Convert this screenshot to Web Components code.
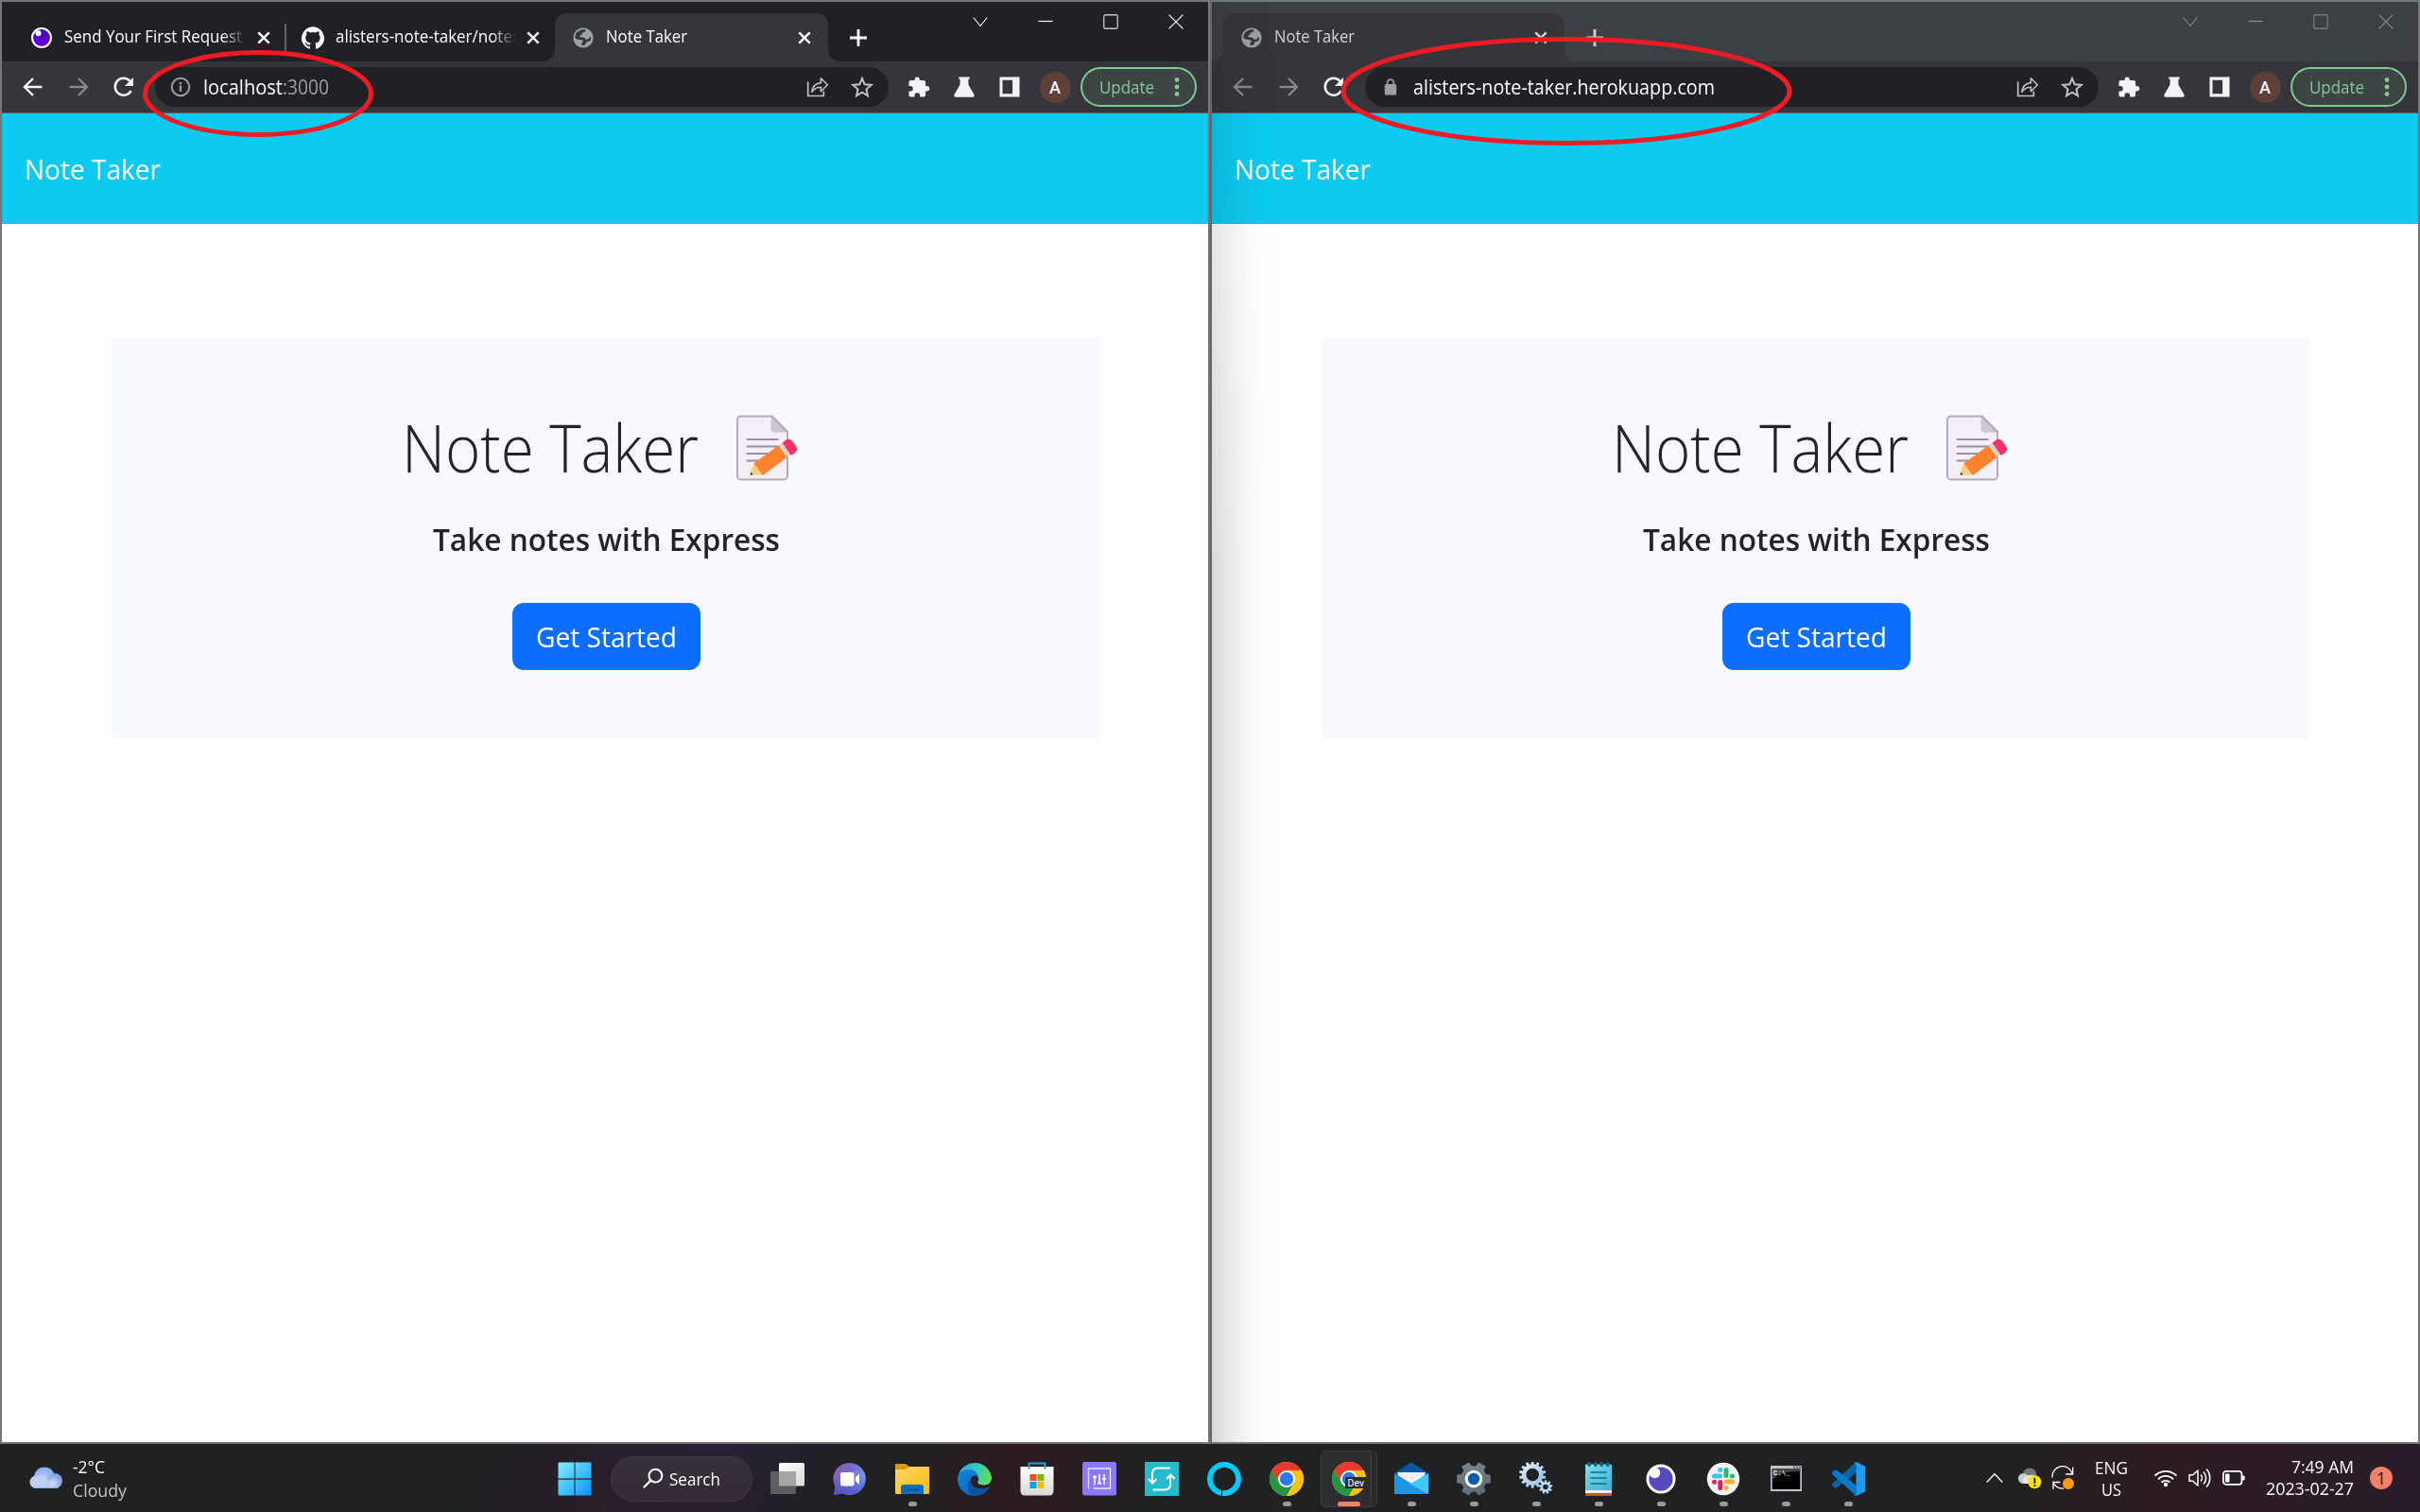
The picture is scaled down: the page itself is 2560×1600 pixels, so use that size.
<!DOCTYPE html>
<html lang="en">
<head>
<meta charset="utf-8">
<title>Note Taker</title>
<style>
body{margin:0;width:2560px;height:1600px;overflow:hidden;background:#202123;font-family:"Open Sans","Noto Sans",sans-serif}
</style>
</head>
<body>
<desk-top></desk-top>
<script>
const define = (name, html, init) => {
  const tpl = document.createElement('template');
  tpl.innerHTML = html;
  customElements.define(name, class extends HTMLElement {
    connectedCallback() {
      if (this.shadowRoot) return;
      this.attachShadow({mode: 'open'}).append(tpl.content.cloneNode(true));
      if (init) init(this, this.shadowRoot);
    }
  });
};

/* Icon set: [width, height, markup]; the viewBox has the same size. */
const chrome = `<circle cx="18" cy="18" r="18" fill="#fbbc05"/><path d="M2.4 9A18 18 0 0 1 33.6 9L18 9 10.2 22.5z" fill="#e63b2e"/><path d="M2.4 9A18 18 0 0 0 18 36L25.8 22.5 18 18 10.2 22.5z" fill="#259545"/><path d="M33.6 9A18 18 0 0 1 18 36L25.8 22.5 18 9z" fill="#fbc116"/><circle cx="18" cy="18" r="9" fill="#fff"/><circle cx="18" cy="18" r="7.2" fill="#2a79e8"/>`;
const gearPath = (cx, cy, ro, ri, n) => {
  let d = '';
  for (let i = 0; i < n; i++) {
    const a = i * 2 * Math.PI / n - Math.PI / 2, s = Math.PI / n;
    [[ri, -s * 1.0], [ri, -s * .62], [ro, -s * .42], [ro, s * .42], [ri, s * .62]].forEach(([r, o]) => {
      d += (d ? 'L' : 'M') + (cx + r * Math.cos(a + o)).toFixed(2) + ' ' + (cy + r * Math.sin(a + o)).toFixed(2);
    });
  }
  return d + 'z';
};
const hole = (cx, cy, r) => `M${cx - r} ${cy}a${r} ${r} 0 1 0 ${2 * r} 0a${r} ${r} 0 1 0 ${-2 * r} 0z`;
const ICONS = {
  back: [24, 24, `<path d="M21.5 12H3.5M12 3L3 12l9 9" fill="none" stroke="currentColor" stroke-width="2.4"/>`],
  forward: [24, 24, `<path d="M2.5 12h18M12 3l9 9-9 9" fill="none" stroke="currentColor" stroke-width="2.4"/>`],
  reload: [24, 24, `<path d="M19.6 16.2A9 9 0 1 1 18.6 6" fill="none" stroke="currentColor" stroke-width="2.5"/><path d="M22 2v9h-9z" fill="currentColor"/>`],
  info: [24, 24, `<circle cx="12" cy="12" r="9.3" fill="none" stroke="currentColor" stroke-width="2"/><path d="M12 10.6v6.4M12 7v2.2" stroke="currentColor" stroke-width="2.2"/>`],
  lock: [24, 24, `<rect x="5.8" y="9" width="12.4" height="11.5" rx="1.5" fill="currentColor"/><path d="M8.6 10V7.6a3.4 3.4 0 0 1 6.8 0V10" fill="none" stroke="currentColor" stroke-width="1.8"/>`],
  share: [24, 24, `<path d="M1.7 6.5v15h16.6v-5" fill="none" stroke="currentColor" stroke-width="1.7"/><path d="M5.8 17.4C6.6 11 10 8 15.4 7.6V2.8l7 7-7 7v-4.6c-4.2 0-7 1.4-9.6 5.2z" fill="none" stroke="currentColor" stroke-width="1.6" stroke-linejoin="round"/>`],
  star: [24, 24, `<path d="M12 2.8l2.7 6.5 7 .6-5.3 4.6 1.6 6.9-6-3.7-6 3.7 1.6-6.9L2.300 9.900l7-.6z" fill="none" stroke="currentColor" stroke-width="2"/>`],
  puzzle: [24, 24, `<path d="M20.6 11.100h-1.500V6.900c0-1.100-.9-2-2-2h-4.200V3.600a2.700 2.700 0 0 0-5.300 0v1.300H3.500c-1.100 0-2 .9-2 2v4h1.400a2.850 2.850 0 0 1 0 5.700H1.500v4c0 1.100.9 2 2 2h4v-1.400a2.850 2.850 0 0 1 5.700 0v1.400h3.900c1.100 0 2-.9 2-2v-4.200h1.500a2.650 2.650 0 0 0 0-5.300z" fill="currentColor"/>`],
  flask: [24, 24, `<path d="M6.300 1.500h11.400v2.300h-1.300v5.800l6 10.300c.8 1.400-.1 2.800-1.500 2.800H3.100c-1.400 0-2.300-1.400-1.500-2.800l6-10.300V3.800H6.300z" fill="currentColor"/>`],
  panel: [24, 24, `<path d="M1.500 1.500h21v21h-21zM4.500 4.800v14.500h10.600V4.800z" fill="currentColor" fill-rule="evenodd"/>`],
  close: [16, 16, `<path d="M2.300 2.300l11.400 11.400M13.700 2.300L2.300 13.700" stroke="currentColor" stroke-width="2.400"/>`],
  plus: [20, 20, `<path d="M10 1v18M1 10h18" stroke="currentColor" stroke-width="2.800"/>`],
  dots: [8, 24, `<g fill="currentColor"><circle cx="4" cy="4.500" r="2.400"/><circle cx="4" cy="12" r="2.400"/><circle cx="4" cy="19.500" r="2.400"/></g>`],
  chev: [16, 16, `<path d="M.7 3.500L8 12.500l7.300-9" fill="none" stroke="currentColor" stroke-width="1.100"/>`],
  min: [16, 16, `<path d="M.5 7.500h15" stroke="currentColor" stroke-width="1.200"/>`],
  max: [16, 16, `<rect x=".75" y=".75" width="14.500" height="14.500" rx="1.500" fill="none" stroke="currentColor" stroke-width="1.300" opacity=".75"/>`],
  exit: [16, 16, `<path d="M.6.6l14.800 14.800M15.400.6L.6 15.400" stroke="currentColor" stroke-width="1.200"/>`],
  globe: [22, 22, `<circle cx="11" cy="11" r="10.600" fill="#9aa0a6"/><path d="M5 4.600C8.200 2.300 11.500 2 13.600 2.500c-.2 1.700-1 2.500-2.600 2.700-1.300.2-1.200 1.300-1.600 2.300-.5 1-2 .6-2.200 1.700-.1 1.100 1.200 1.200 2.700 1.200 2 0 3.300.9 3.600 2.300h1.900c1 0 1.700-.5 1.900-1.400.3-1 1-1.200 2-.9-.1 1.400-.5 2.900-1.200 4-1.300.4-2.900.2-3.500.9-.7.8-.7 2.600-1.900 3.300-1 .5-2.700.6-3.600 0v-1.700c1.300-.4 1.800-1.300 1.500-2.600-.4-1.200-2-1-3.600-1.200-1.800-.3-3.800-1-4.600-2.100C2.300 8.700 3.300 6 5 4.600z" fill="#35363a"/>`],
  postman: [22, 22, `<circle cx="11" cy="11" r="11" fill="#fff"/><circle cx="11" cy="11" r="8.900" fill="url(#pm)"/><circle cx="7.600" cy="6.300" r="3" fill="#fff"/><defs><linearGradient id="pm" x1="0" y1="0" x2="0" y2="1"><stop offset="0" stop-color="#4000bf"/><stop offset="1" stop-color="#6c05dc"/></linearGradient></defs>`],
  github: [24, 24, `<path fill="#fff" d="M12 .3a12 12 0 0 0-3.800 23.400c.6.100.8-.3.800-.6v-2c-3.300.7-4-1.600-4-1.600-.6-1.400-1.400-1.800-1.400-1.800-1-.7.100-.7.100-.7 1.200 0 1.900 1.200 1.900 1.200 1 1.800 2.800 1.300 3.500 1 0-.8.4-1.300.7-1.600-2.700-.3-5.500-1.300-5.500-6 0-1.200.5-2.300 1.300-3.100-.2-.4-.6-1.600 0-3.200 0 0 1-.3 3.400 1.200a11.500 11.500 0 0 1 6 0c2.300-1.500 3.300-1.200 3.300-1.200.6 1.600.2 2.800 0 3.200.9.800 1.300 1.900 1.300 3.200 0 4.600-2.800 5.600-5.500 5.900.5.400.9 1 .9 2.200v3.300c0 .3.100.7.800.6A12 12 0 0 0 12 .3"/>`],
  memo: [66, 70, `<path d="M5 1.500h32.500L54 18v46.500a4 4 0 0 1-4 4H5a4 4 0 0 1-4-4v-59a4 4 0 0 1 4-4z" fill="#f3eef8" stroke="#b4acbc" stroke-width="2"/><path d="M36.500 1.500L54 18.500H40.500a4 4 0 0 1-4-4z" fill="#cdc4d6"/><path d="M37.500 1.500L54 18" stroke="#b4acbc" stroke-width="2"/><path d="M11.500 26h32M11.500 33.500h32M11.500 41h24M11.500 48.500h15" stroke="#998ea4" stroke-width="2.200" stroke-linecap="round"/><path d="M14.500 63.500L18.500 51l9.500 12.800z" fill="#ffce7c"/><path d="M14.500 63.500l.9-3 2.400 3.100z" fill="#402a32"/><path d="M18.500 51.200L45 32l9 12.600L27.800 64z" fill="#ff822d"/><path d="M44.600 32.300l4.200-3 9 12.400-4.300 3.200z" fill="#d3d3d3"/><path d="M48.600 29.400l3.200-2.300q4.200-2.900 7.300.7l3.900 5.300q2.800 4.100-1.200 7.200l-4 2.600-9.200-13.500z" fill="#fb2f65"/>`],
  weather: [36, 24, `<defs><radialGradient id="w1" cx=".45" cy=".75" r=".8"><stop offset="0" stop-color="#c4d5f4"/><stop offset="1" stop-color="#86a9ee"/></radialGradient><radialGradient id="w2" cx=".35" cy=".7" r=".75"><stop offset="0" stop-color="#d3e0f8"/><stop offset="1" stop-color="#7397e0"/></radialGradient></defs><circle cx="17" cy="11.500" r="11" fill="url(#w1)"/><circle cx="28" cy="15" r="8" fill="url(#w2)"/><path d="M7.500 9.500h10l8 13.500h-18A6.800 6.800 0 0 1 7.500 9.500z" fill="#bdd0f4"/><path d="M4 21.800Q6 23 8 23h20q2.500 0 4.500-1.200z" fill="#8fb2f0"/>`],
  start: [36, 36, `<defs><linearGradient id="st" x1="0" y1="0" x2="1" y2="1"><stop offset="0" stop-color="#7ff0ff"/><stop offset="1" stop-color="#0a93f8"/></linearGradient></defs><path d="M1.500.5H17.500V17.500H.5V1.500a1 1 0 0 1 1-1zM18.500.5h16a1 1 0 0 1 1 1v16h-17zM.5 18.700h17v16.800h-16a1 1 0 0 1-1-1zM18.500 18.700h17v15.800a1 1 0 0 1-1 1h-16z" fill="url(#st)"/>`],
  search: [22, 22, `<circle cx="13.400" cy="8.600" r="6.900" fill="none" stroke="#fff" stroke-width="2"/><path d="M8.400 13.600L1.500 20.500" stroke="#fff" stroke-width="2.200" stroke-linecap="round"/>`],
  tasks: [36, 36, `<defs><linearGradient id="tv" x1="0" y1="0" x2="1" y2="1"><stop offset="0" stop-color="#fff"/><stop offset="1" stop-color="#d9d9d9"/></linearGradient></defs><rect x="9" y="1" width="27" height="24.500" rx="1.500" fill="url(#tv)"/><rect x="0" y="10" width="27" height="24" rx="1.500" fill="#5e5e5e"/><path d="M9 10h18v15.500H9z" fill="#a5a5a5"/>`],
  chat: [36, 36, `<defs><linearGradient id="ch" x1="0" y1="0" x2="1" y2=".5"><stop offset="0" stop-color="#8f60a8"/><stop offset=".5" stop-color="#7468cc"/><stop offset="1" stop-color="#7a9bf0"/></linearGradient><linearGradient id="ch2" x1="0" y1="0" x2="0" y2="1"><stop offset=".4" stop-color="#5059c9" stop-opacity="0"/><stop offset="1" stop-color="#5451c8"/></linearGradient></defs><path d="M18 1a17 17 0 1 1-7 32.600L1 35l1.500-9A17 17 0 0 1 18 1z" fill="url(#ch)"/><path d="M18 1a17 17 0 1 1-7 32.600L1 35l1.500-9A17 17 0 0 1 18 1z" fill="url(#ch2)"/><rect x="8" y="11" width="14.500" height="14.500" rx="2" fill="#fff"/><path d="M24 16l4-3.200v11L24 20.500z" fill="#fff"/>`],
  folder: [36, 36, `<defs><linearGradient id="fo" x1="0" y1="0" x2="1" y2="1"><stop offset="0" stop-color="#ffd766"/><stop offset="1" stop-color="#fcb90d"/></linearGradient></defs><path d="M0 3a1 1 0 0 1 1-1h10l4 3v3H0z" fill="#dd9a00"/><path d="M0 8h11l4-3h20a1 1 0 0 1 1 1v27a1 1 0 0 1-1 1H1a1 1 0 0 1-1-1z" fill="url(#fo)"/><path d="M6 34V27a3 3 0 0 1 3-3h18a3 3 0 0 1 3 3v7z" fill="#0a6fc2"/><path d="M11 29.500h14" stroke="#0a4a88" stroke-width="1.500"/>`],
  edge: [36, 36, `<defs><linearGradient id="e1" x1="0" y1=".3" x2="1" y2=".5"><stop offset="0" stop-color="#2fa8e8"/><stop offset=".5" stop-color="#34c6c4"/><stop offset="1" stop-color="#66e04d"/></linearGradient><linearGradient id="e2" x1="0" y1="0" x2=".6" y2="1"><stop offset="0" stop-color="#1286d8"/><stop offset="1" stop-color="#0869c6"/></linearGradient></defs><path d="M.8 14A18 18 0 0 1 36 17c0 5-4 7.500-8 7.500-4 0-8-1.500-6.500-4 1.500-2 .6-6.500-4-6.500z" fill="url(#e1)"/><path d="M0 18C0 11 6 8 12 8c6.500 0 10.500 5 10 10 0-4-6-5-8 0-2 6 2 11.500 8 14-2 3-4 4-4 4A18 18 0 0 1 0 18z" fill="url(#e2)"/><path d="M14 18c-6 5-4 15 4 18 7 0 12-3.500 15.500-8.500.6-1-.2-1-1-.7C22 31 13 26 14 18z" fill="#124f9f"/>`],
  store: [36, 36, `<defs><linearGradient id="so" x1="0" y1="0" x2="0" y2="1"><stop offset="0" stop-color="#fff"/><stop offset="1" stop-color="#d8d8d8"/></linearGradient></defs><path d="M.5 5h35v26a4.500 4.500 0 0 1-4.500 4.500H5A4.500 4.500 0 0 1 .5 31z" fill="url(#so)"/><path d="M9.500 7.500v-6h17v6" fill="none" stroke="#1da2e4" stroke-width="2"/><path d="M10.500 13h7v7h-7z" fill="#f25022"/><path d="M18.500 13h7v7h-7z" fill="#7fba00"/><path d="M10.500 21h7v7h-7z" fill="#00a4ef"/><path d="M18.500 21h7v7h-7z" fill="#ffb900"/>`],
  mixer: [36, 36, `<rect width="36" height="35.500" rx="2.500" fill="#8b79fb"/><path d="M11.500 28H29.500V7H6.500v21.500" fill="none" stroke="#ece8ff" stroke-width="1.300"/><path d="M13 14v10.500M18 13v9M23 13v11" stroke="#fff" stroke-width="1.500"/><path d="M11 16h4M16 22.500h4M21 18h4" stroke="#fff" stroke-width="1.800"/>`],
  sync: [36, 36, `<rect width="36" height="36" fill="#27b9cc"/><path d="M27 6.500H14q-6 0-6 6V22M4 18l4.200 4.500L12.500 18M8.500 29.500h12q6.500 0 6.500-6V14M23 18l4.200-4.500 4.300 4.500" fill="none" stroke="#fff" stroke-width="2"/>`],
  alexa: [36, 36, `<circle cx="18" cy="18" r="15.100" fill="none" stroke="#00caff" stroke-width="5.800"/><path d="M15.500 36v-6.500" stroke="#202123" stroke-width="1"/><path d="M16 35.800V31.500C24 29.500 29 26 30.500 20l4 3C31 32 24 36 16 35.800z" fill="#00caff"/>`],
  chrome: [36, 36, chrome],
  dev: [36, 36, chrome + `<rect x="14" y="16" width="22" height="12" fill="#2b2b2b"/><text x="16.500" y="26" font-size="10.500" font-family="Roboto,sans-serif" fill="#fff">Dev</text>`],
  mail: [36, 36, `<path d="M0 12L16.500 1.200q1.500-1 3 0L36 12 18 20z" fill="#0a57a4"/><path d="M3.500 11h29v3L18 25 3.500 14z" fill="#eee"/><path d="M0 12l18 11v11H0z" fill="#1c97e6"/><path d="M36 12L14 25l22 9z" fill="#3ccaf6"/><path d="M14 22l22 12H1q-1 0-1-1z" fill="#1f93e4"/>`],
  gear: [36, 36, `<defs><linearGradient id="ge" x1="0" y1="0" x2="1" y2="1"><stop offset="0" stop-color="#7e8890"/><stop offset="1" stop-color="#5c666e"/></linearGradient></defs><path d="${gearPath(18,18,17.500,13,6)}" fill="url(#ge)" stroke="url(#ge)" stroke-width="1.500" stroke-linejoin="round" transform="rotate(30 18 18)"/><circle cx="18" cy="18" r="9.300" fill="#f2f2f2"/><circle cx="18" cy="18" r="6.200" fill="#0c5cab"/>`],
  gears: [36, 36, `<defs><linearGradient id="gs" x1="0" y1="0" x2="1" y2="1"><stop offset="0" stop-color="#eaf5fb"/><stop offset="1" stop-color="#8fb8e8"/></linearGradient></defs><path d="${gearPath(14.200,13.500,14.200,11.200,14)}${hole(14.200,13.500,6.800)}" fill="url(#gs)" fill-rule="evenodd"/><path d="${gearPath(28,26.500,7.400,5.400,9)}${hole(28,26.500,2.800)}" fill="#b7d8ef" fill-rule="evenodd"/>`],
  notepad: [36, 36, `<defs><linearGradient id="np" x1="0" y1="0" x2="1" y2="1"><stop offset="0" stop-color="#7fe0ef"/><stop offset="1" stop-color="#38b1ce"/></linearGradient></defs><path d="M4 31h28v4a1 1 0 0 1-1 1H5a1 1 0 0 1-1-1z" fill="#c05a10"/><path d="M4 28h28v5H4z" fill="#f0f0f0"/><path d="M4 3.500a1 1 0 0 1 1-1h26a1 1 0 0 1 1 1V30H4z" fill="url(#np)"/><path d="M9.500 11h17M9.500 17h17M9.500 23h17" stroke="#0f6c88" stroke-width="1.700"/><g fill="#14677f"><rect x="6.500" width="3.500" height="5" rx="1.700"/><rect x="13" width="3.500" height="5" rx="1.700"/><rect x="19.500" width="3.500" height="5" rx="1.700"/><rect x="26" width="3.500" height="5" rx="1.700"/></g>`],
  insomnia: [36, 36, `<circle cx="18" cy="18" r="15.500" fill="#fff"/><circle cx="18" cy="18" r="12.600" fill="#5849be"/><circle cx="11.500" cy="11.500" r="5.800" fill="#fff"/>`],
  slack: [36, 36, `<circle cx="18" cy="18" r="17.200" fill="#f4f4f4"/><g stroke-width="5" stroke-linecap="round"><path d="M8.500 15h6" stroke="#36c5f0"/><path d="M21 8.500v6" stroke="#2eb67d"/><path d="M21.500 21h6" stroke="#ecb22e"/><path d="M14.800 21.500v6" stroke="#e01e5a"/><path d="M14.700 8.400h.1" stroke="#36c5f0"/><path d="M27.400 15h.1" stroke="#2eb67d"/><path d="M21 27.500h.1" stroke="#ecb22e"/><path d="M8.500 21.200h.1" stroke="#e01e5a"/></g>`],
  cmd: [36, 36, `<rect x="2" y="4" width="33" height="27" fill="#bfc3c6"/><path d="M26 5.500h2M29 5.500h2M32 5.500h2" stroke="#446" stroke-width="1.300"/><rect x="3.700" y="7" width="29.600" height="22" fill="#000"/><path d="M3.700 7h29.600v3C18 10 9 13 3.700 19z" fill="#454545"/><text x="4.800" y="14" font-size="7.500" font-weight="700" font-family="Liberation Mono,monospace" fill="#f2f2f2">C:\\_</text>`],
  vscode: [36, 36, `<path d="M25.500 1L1.600 22.500q-1.700 1.500 0 3l1.800 1.700q1.300 1 2.600 0L27 11z" fill="#0065a9"/><path d="M25.500 35L1.600 13.500q-1.700-1.500 0-3l1.800-1.700q1.300-1 2.600 0L27 25z" fill="#007acc"/><path d="M26.500 0L36 4.500v27L26.500 36z" fill="#1f9cf0"/><path d="M26.500 36q-1 0-2-1l2-3zM26.500 0q-1 0-2 1l2 3z" fill="#1f9cf0"/>`],
  up: [18, 12, `<path d="M.7 10.500L9 1.700l8.300 8.800" fill="none" stroke="#fff" stroke-width="1.400"/>`],
  cloud: [26, 24, `<circle cx="13" cy="9" r="7.500" fill="#777"/><circle cx="6.500" cy="12.500" r="5.500" fill="#c9c9c9"/><path d="M6 18h12V9Q10 8 6 13z" fill="#e8e8e8"/><circle cx="18.300" cy="16.300" r="7" fill="#ffe600"/><path d="M18.300 11.700v6M18.300 19.100v1.800" stroke="#222" stroke-width="1.900"/>`],
  update: [26, 26, `<path d="M2 12.500A10.800 10.800 0 0 1 23 8M23.700 1.500V9h-7.500M3 25v-7.500h7.500M3 18a11 11 0 0 0 11 6" fill="none" stroke="#fff" stroke-width="1.300"/><circle cx="19" cy="19" r="6" fill="#ff9a10"/>`],
  wifi: [26, 20, `<g fill="none" stroke="#fff" stroke-width="1.800"><path d="M1.500 7.700a16 16 0 0 1 23 0" /><path d="M5 11.300a11 11 0 0 1 16 0"/><path d="M8.500 14.700a6.300 6.300 0 0 1 9 0"/></g><circle cx="13" cy="17" r="2.200" fill="#fff"/>`],
  volume: [26, 22, `<path d="M2 7.800h3.800L11 3v16l-5.200-4.800H2z" fill="none" stroke="#fff" stroke-width="1.500" stroke-linejoin="round"/><path d="M14 7.500a5 5 0 0 1 0 7M17 4.500a9.500 9.500 0 0 1 0 13M20 1.500a14 14 0 0 1 0 19" fill="none" stroke="#fff" stroke-width="1.600"/>`],
  battery: [26, 18, `<rect x="1.900" y="1.900" width="19.500" height="14" rx="3" fill="none" stroke="#fff" stroke-width="1.700"/><rect x="4" y="4.500" width="4.500" height="9" rx="1" fill="#fff"/><path d="M22 6.500h1.200a1.500 1.500 0 0 1 1.500 1.500v2a1.500 1.500 0 0 1-1.500 1.500H22z" fill="#fff"/>`]
};
define('ui-icon', `<style>:host{display:inline-flex;flex:none}svg{display:block}</style>`, (el, root) => {
  const [w, h, m] = ICONS[el.getAttribute('name')];
  root.innerHTML += `<svg width="${w}" height="${h}" viewBox="0 0 ${w} ${h}">${m}</svg>`;
});

/* A line of text condensed or widened to a given advance width. */
define('fit-text', `<style>:host{display:block;flex:none;white-space:nowrap}span{display:inline-block;transform-origin:0 50%}</style><span><slot></slot></span>`, (el, root) => {
  const w = +el.getAttribute('w'), s = root.querySelector('span');
  el.style.width = w + 'px';
  const natural = s.getBoundingClientRect().width;
  if (natural) s.style.transform = `scaleX(${w / natural})`;
});

define('browser-tab', `<style>
:host{display:flex;align-items:center;height:51px;width:286px;box-sizing:border-box;padding:0 15px 0 19px;font-size:18px;color:#fff;flex:none}
:host([active]){background:#35363a;border-radius:12px 12px 0 0;width:289px;padding-right:17px;position:relative}
:host([wide]){width:361px;color:#d0d2d5}
:host([sep]) i{display:block;width:2px;height:30px;background:#5f6368;margin:0 -17px 0 14px}
:host([active])::before,:host([active])::after{content:"";position:absolute;bottom:0;width:12px;height:12px}
:host([active])::before{left:-12px;background:radial-gradient(circle at 0 0,transparent 11.5px,#35363a 12px)}
:host([active])::after{right:-12px;background:radial-gradient(circle at 100% 0,transparent 11.5px,#35363a 12px)}
.fav{width:24px;display:flex;justify-content:center;margin:0 12px 0 -1px}
.t{flex:1;overflow:hidden;min-width:0;padding-bottom:3px}
:host([fade]) .t{-webkit-mask-image:linear-gradient(90deg,#000 86%,transparent);mask-image:linear-gradient(90deg,#000 86%,transparent);margin-right:10px}
</style><div class="fav"><slot name="fav"></slot></div><div class="t"><slot></slot></div><ui-icon name="close"></ui-icon><i></i>`);

define('note-page', `<style>
:host{display:flex;flex-direction:column;flex:1;background:#fff;align-items:center}
header{align-self:stretch;height:117px;background:#0dcaf0;color:#fff;font-size:29.500px;display:flex;align-items:center;padding-left:24px;box-sizing:border-box}
main{margin:120px 0 0 2px;width:1044px;height:424px;background:#f8f9fc;display:flex;flex-direction:column;align-items:center;color:#212529}
.h{display:flex;align-items:center;height:84px;margin-top:75px;font-size:70px;font-weight:300;gap:40px;padding-right:12px;line-height:84px}
.h fit-text{margin-top:-3px}
h4{margin:29px 0 0;font-size:33px;font-weight:600;line-height:52px;height:52px}
button{margin:41px 0 0;font:29.500px "Open Sans",sans-serif;border:0;background:#0d6efd;color:#fff;border-radius:12px;width:199px;height:71px;display:flex;align-items:center;justify-content:center;padding:0}
</style>
<header><fit-text w="144">Note Taker</fit-text></header>
<main><div class="h"><fit-text w="314">Note Taker</fit-text><ui-icon name="memo"></ui-icon></div>
<h4><fit-text w="367">Take notes with Express</fit-text></h4>
<button><fit-text w="149">Get Started</fit-text></button></main>`);

define('tool-bar', `<style>
:host{display:flex;align-items:center;height:54px;background:#35363a;border-bottom:1px solid #5c5d60;color:#f1f3f4;padding-left:9px}
.c{width:48px;display:flex;justify-content:center}.off{color:#87888b}
:host([nohistory]) .b{color:#87888b}
.o{margin:0 8px 0 9px;width:776px;height:42px;border-radius:21px;background:#202124;display:flex;align-items:center;box-sizing:border-box;padding:0 16px 0 15px;font-size:21px;color:#fff}
.g{flex:1}.o .s{color:#bdc1c6;display:flex;gap:23px}
.av{width:33px;height:33px;border-radius:50%;background:#5d4037;font:500 18px/33px Roboto,sans-serif;text-align:center}
.u{margin-left:3px;width:123px;height:42px;box-sizing:border-box;border:2px solid #81c995;border-radius:21px;background:#3c4543;color:#81c995;display:flex;align-items:center;font-size:18px;padding-left:18px;gap:20px}
</style>
<div class="c b"><ui-icon name="back"></ui-icon></div><div class="c off"><ui-icon name="forward"></ui-icon></div><div class="c"><ui-icon name="reload"></ui-icon></div>
<div class="o"><slot></slot><div class="g"></div><div class="s"><ui-icon name="share"></ui-icon><ui-icon name="star"></ui-icon></div></div>
<div class="c"><ui-icon name="puzzle"></ui-icon></div><div class="c"><ui-icon name="flask"></ui-icon></div><div class="c"><ui-icon name="panel"></ui-icon></div><div class="c"><div class="av">A</div></div>
<div class="u"><fit-text w="58">Update</fit-text><ui-icon name="dots"></ui-icon></div>`);

define('browser-window', `<style>
:host{display:flex;flex-direction:column;width:1280px;height:1528px;box-sizing:border-box;border:2px solid #767676;position:relative;--strip:#202124}
:host([idle]){--strip:#3c4043;border-left-color:#666}
.strip{height:63px;background:var(--strip);display:flex;align-items:flex-end;padding-left:12px;color:#fff;box-sizing:border-box}
:host([idle]) .strip{color:#d0d2d5}
.plus{height:51px;display:flex;align-items:center;margin-left:22px;flex:1}
.ctl{display:flex;gap:53px;align-self:flex-start;margin:13px 26px 0 0}
:host([idle]) .ctl{color:#8b8d8f}
.shade{display:none}
:host([idle]) .shade{display:block;position:absolute;inset:0 auto 0 0;width:72px;background:linear-gradient(90deg,rgba(0,0,0,.15),rgba(0,0,0,.09) 25%,rgba(0,0,0,.03) 55%,rgba(0,0,0,.008) 75%,transparent);-webkit-mask-image:linear-gradient(rgba(0,0,0,.45),#000 600px);mask-image:linear-gradient(rgba(0,0,0,.45),#000 600px)}
</style>
<div class="strip"><slot name="tabs"></slot><div class="plus"><ui-icon name="plus"></ui-icon></div>
<div class="ctl"><ui-icon name="chev"></ui-icon><ui-icon name="min"></ui-icon><ui-icon name="max"></ui-icon><ui-icon name="exit"></ui-icon></div></div>
<slot name="bar"></slot><note-page></note-page><div class="shade"></div>`);

define('task-cell', `<style>
:host{display:flex;width:66px;height:72px;flex:none;flex-direction:column;align-items:center;box-sizing:border-box;padding-top:19px;position:relative}
ui-icon{z-index:1}
i{display:block;width:9px;height:5px;border-radius:3px;background:#9a9a9a;margin-top:6px;visibility:hidden;z-index:1}
:host([run]) i{visibility:visible}:host([active]) i{visibility:visible;width:24px;margin-left:-1px;background:#f4806a}
:host([active])::before,:host([active])::after{content:"";position:absolute;left:3px;top:7px;width:52px;height:60px;border-radius:6px;background:#2d2d30;border:1px solid #404043;box-sizing:border-box}
:host([active])::before{width:60px;background:#28282b;border-color:#38383b}
:host([active])::after{width:54px}
</style>`, (el, root) => {
  const icon = document.createElement('ui-icon');
  icon.setAttribute('name', el.getAttribute('icon'));
  root.append(icon, document.createElement('i'));
});

define('task-bar', `<style>
:host{display:flex;height:72px;align-items:center;color:#fff;font-size:18px;line-height:24px;
background:radial-gradient(ellipse 190px 130px at 670px 72px,#341c2c99,transparent),radial-gradient(ellipse 170px 110px at 750px 0,#252136,transparent),radial-gradient(ellipse 130px 120px at 1085px 40px,#2f1a20,transparent),linear-gradient(90deg,transparent 2120px,#2c1c23 2280px,#2a1d29 2560px),#202123}
.w{width:575px;display:flex;align-items:center;box-sizing:border-box;padding-left:30px;gap:11px;flex:none}
.w small{display:block;margin-top:1px;font-size:18px;color:#c6c6c6}
.p{width:150px;height:48px;border-radius:24px;background:linear-gradient(#37313c,#342a35);border:1px solid #413b46;box-sizing:border-box;margin:2px 4px 0 5px;display:flex;align-items:center;padding-left:33px;gap:6px;flex:none}
.p ui-icon{margin-top:-3px}
.r{margin-left:auto;display:flex;align-items:center;height:72px}
.l{display:flex;flex-direction:column;align-items:center;line-height:23px}
.d{align-items:flex-end}
.n{width:24px;height:24px;border-radius:50%;background:#f4806a;color:#201a1c;text-align:center;margin:0 29px 0 17px}
</style>
<div class="w"><ui-icon name="weather"></ui-icon><div><fit-text w="34">-2°C</fit-text><small><fit-text w="57">Cloudy</fit-text></small></div></div>
<task-cell icon="start"></task-cell><div class="p"><ui-icon name="search"></ui-icon><fit-text w="54">Search</fit-text></div>
<task-cell icon="tasks"></task-cell><task-cell icon="chat"></task-cell><task-cell icon="folder" run></task-cell><task-cell icon="edge"></task-cell><task-cell icon="store"></task-cell><task-cell icon="mixer"></task-cell><task-cell icon="sync"></task-cell><task-cell icon="alexa"></task-cell><task-cell icon="chrome" run></task-cell><task-cell icon="dev" active></task-cell><task-cell icon="mail" run></task-cell><task-cell icon="gear" run></task-cell><task-cell icon="gears" run></task-cell><task-cell icon="notepad" run></task-cell><task-cell icon="insomnia" run></task-cell><task-cell icon="slack" run></task-cell><task-cell icon="cmd" run></task-cell><task-cell icon="vscode" run></task-cell>
<div class="r"><ui-icon name="up" style="margin-right:15px"></ui-icon><ui-icon name="cloud" style="margin-right:9px"></ui-icon><ui-icon name="update" style="margin-right:21px"></ui-icon>
<div class="l" style="margin:2px 27px 0 0"><fit-text w="35">ENG</fit-text><fit-text w="21">US</fit-text></div>
<ui-icon name="wifi" style="margin-right:10px"></ui-icon><ui-icon name="volume" style="margin-right:10px"></ui-icon><ui-icon name="battery" style="margin-right:21px"></ui-icon>
<div class="l d"><fit-text w="66">7:49 AM</fit-text><fit-text w="93">2023-02-27</fit-text></div><div class="n">1</div></div>`);

define('desk-top', `<style>
:host{display:flex;flex-direction:column;width:2560px;height:1600px;position:relative}
.row{display:flex}.marks{position:absolute;left:0;top:0}
.port{color:#9aa0a6}.addr{display:flex}.lead{width:24px;height:24px;color:#9aa0a6}
</style>
<div class="row">
<browser-window><div slot="tabs" style="display:flex"><browser-tab fade sep style="width:287px"><ui-icon slot="fav" name="postman"></ui-icon><fit-text w="188">Send Your First Request</fit-text></browser-tab><browser-tab fade><ui-icon slot="fav" name="github"></ui-icon><fit-text w="195">alisters-note-taker/notes</fit-text></browser-tab><browser-tab active><ui-icon slot="fav" name="globe"></ui-icon><fit-text w="86">Note Taker</fit-text></browser-tab></div>
<tool-bar slot="bar"><ui-icon class="lead" name="info"></ui-icon><div class="addr" style="margin-left:12px"><fit-text w="84">localhost</fit-text><fit-text class="port" w="49">:3000</fit-text></div></tool-bar></browser-window>
<browser-window idle><browser-tab slot="tabs" active wide><ui-icon slot="fav" name="globe"></ui-icon><fit-text w="85">Note Taker</fit-text></browser-tab>
<tool-bar slot="bar" nohistory><ui-icon class="lead" name="lock"></ui-icon><fit-text w="319" style="margin-left:12px">alisters-note-taker.herokuapp.com</fit-text></tool-bar></browser-window>
</div>
<task-bar></task-bar>
<svg class="marks" width="2560" height="200" fill="none" stroke="#ed1c24" stroke-width="5"><ellipse cx="273" cy="99" rx="119.500" ry="43.500"/><ellipse cx="1657" cy="96.500" rx="236" ry="55"/></svg>`);
</script>
</body>
</html>
